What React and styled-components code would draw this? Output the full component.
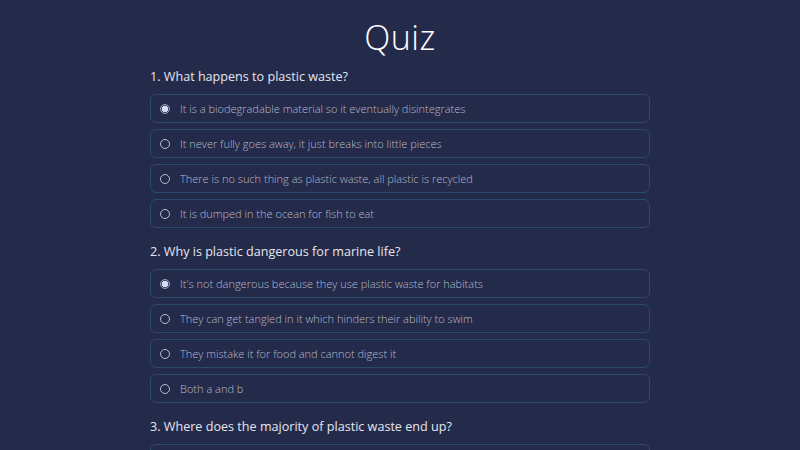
import React from "react";
import styled, { createGlobalStyle } from "styled-components";

const GlobalStyle = createGlobalStyle`
  body {
    margin: 0;
    background-color: #242a4a;
    font-family: "Open Sans", "Liberation Sans", sans-serif;
  }
`;

const Page = styled.div`
  min-height: 100vh;
  display: flex;
  flex-direction: column;
  align-items: center;
  padding-top: 16px;
`;

const Title = styled.h1`
  margin: 0 0 9px;
  font-size: 34px;
  line-height: 43px;
  font-weight: 300;
  letter-spacing: 0.5px;
  color: #ffffff;
`;

const Form = styled.form`
  width: 500px;
  display: flex;
  flex-direction: column;
  gap: 15px;
`;

const Question = styled.fieldset`
  border: none;
  margin: 0;
  padding: 0;
  display: flex;
  flex-direction: column;
`;

const Label = styled.legend`
  padding: 0;
  margin-bottom: 8px;
  font-size: 12.6px;
  line-height: 18px;
  color: #e4e6ef;
`;

const Options = styled.div`
  display: flex;
  flex-direction: column;
  gap: 6px;
`;

const Option = styled.label`
  display: flex;
  align-items: center;
  gap: 10px;
  height: 29px;
  box-sizing: border-box;
  padding: 0 9px;
  border: 1px solid #2b4a6b;
  border-radius: 6px;
  font-size: 11px;
  font-weight: 300;
  color: #b6bacb;
`;

const Radio = styled.span`
  width: 10px;
  height: 10px;
  box-sizing: border-box;
  border-radius: 50%;
  border: 1px solid ${(p) => (p.checked ? "#9aa0b8" : "#b8bccb")};
  background: ${(p) =>
    p.checked ? "radial-gradient(circle, #d6dcf0 0 3px, #3a4264 3.5px)" : "transparent"};
  flex-shrink: 0;
`;

const questions = [
  {
    q: "1. What happens to plastic waste?",
    checked: 0,
    options: [
      "It is a biodegradable material so it eventually disintegrates",
      "It never fully goes away, it just breaks into little pieces",
      "There is no such thing as plastic waste, all plastic is recycled",
      "It is dumped in the ocean for fish to eat",
    ],
  },
  {
    q: "2. Why is plastic dangerous for marine life?",
    checked: 0,
    options: [
      "It's not dangerous because they use plastic waste for habitats",
      "They can get tangled in it which hinders their ability to swim",
      "They mistake it for food and cannot digest it",
      "Both a and b",
    ],
  },
  {
    q: "3. Where does the majority of plastic waste end up?",
    checked: 0,
    options: ["In landfills", "In the ocean", "It is recycled", "It is burned"],
  },
];

const App = () => {
  return (
    <>
      <GlobalStyle />
      <Page>
        <Title>Quiz</Title>
        <Form>
          {questions.map((item, qi) => (
            <Question key={qi}>
              <Label>{item.q}</Label>
              <Options>
                {item.options.map((opt, oi) => (
                  <Option key={oi}>
                    <Radio checked={item.checked === oi} />
                    {opt}
                  </Option>
                ))}
              </Options>
            </Question>
          ))}
        </Form>
      </Page>
    </>
  );
};

export default App;
